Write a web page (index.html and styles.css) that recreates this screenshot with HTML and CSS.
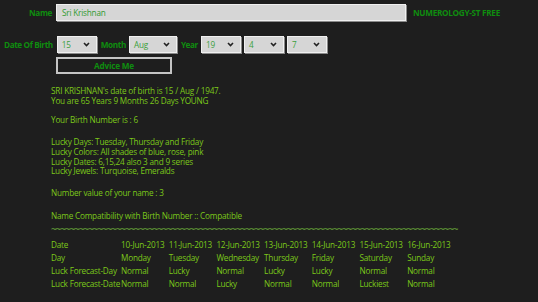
FILE: index.html
```html
<!DOCTYPE html>
<html lang="en">
<head>
    <meta charset="UTF-8">
    <meta name="viewport" content="width=device-width, initial-scale=1.0">
    <title>Numerology-ST Free</title>
    <link rel="stylesheet" href="styles.css">
</head>
<body>
    <div class="row-name">
        <span class="label name-label">Name</span>
        <div class="text-box">Sri Krishnan</div>
        <span class="app-title">NUMEROLOGY-ST FREE</span>
    </div>

    <div class="row-dob">
        <span class="label">Date Of Birth</span>
        <div class="select w-day"><span>15</span><svg width="7" height="5" viewBox="0 0 7 5"><path d="M1 1 L3.5 3.5 L6 1" fill="none" stroke="#222" stroke-width="1.6"/></svg></div>
        <span class="label">Month</span>
        <div class="select w-month"><span>Aug</span><svg width="7" height="5" viewBox="0 0 7 5"><path d="M1 1 L3.5 3.5 L6 1" fill="none" stroke="#222" stroke-width="1.6"/></svg></div>
        <span class="label">Year</span>
        <div class="select w-year"><span>19</span><svg width="7" height="5" viewBox="0 0 7 5"><path d="M1 1 L3.5 3.5 L6 1" fill="none" stroke="#222" stroke-width="1.6"/></svg></div>
        <div class="select w-year"><span>4</span><svg width="7" height="5" viewBox="0 0 7 5"><path d="M1 1 L3.5 3.5 L6 1" fill="none" stroke="#222" stroke-width="1.6"/></svg></div>
        <div class="select w-year"><span>7</span><svg width="7" height="5" viewBox="0 0 7 5"><path d="M1 1 L3.5 3.5 L6 1" fill="none" stroke="#222" stroke-width="1.6"/></svg></div>
    </div>

    <button class="btn-advice">Advice Me</button>

    <div class="output">
        <p class="p-first">SRI KRISHNAN's date of birth is 15 / Aug / 1947.<br>You are 65 Years 9 Months 26 Days YOUNG</p>
        <p class="p-birth">Your Birth Number is : 6</p>
        <p class="p-lucky">Lucky Days: Tuesday, Thursday and Friday<br>Lucky Colors: All shades of blue, rose, pink<br>Lucky Dates: 6,15,24 also 3 and 9 series<br>Lucky Jewels: Turquoise, Emeralds</p>
        <p class="p-value">Number value of your name : 3</p>
        <p class="p-compat">Name Compatibility with Birth Number :: Compatible</p>
        <div class="tilde">~~~~~~~~~~~~~~~~~~~~~~~~~~~~~~~~~~~~~~~~~~~~~~~~~~~~~~~~~~~~~~~~~~~~~~~~~~~~~~~~~~~~~~~~</div>
        <div class="forecast">
            <span class="cell-head">Date</span><span>10-Jun-2013</span><span>11-Jun-2013</span><span>12-Jun-2013</span><span>13-Jun-2013</span><span>14-Jun-2013</span><span>15-Jun-2013</span><span>16-Jun-2013</span>
            <span class="cell-head">Day</span><span>Monday</span><span>Tuesday</span><span>Wednesday</span><span>Thursday</span><span>Friday</span><span>Saturday</span><span>Sunday</span>
            <span class="cell-head">Luck Forecast-Day</span><span>Normal</span><span>Lucky</span><span>Normal</span><span>Lucky</span><span>Lucky</span><span>Normal</span><span>Normal</span>
            <span class="cell-head">Luck Forecast-Date</span><span>Normal</span><span>Normal</span><span>Lucky</span><span>Normal</span><span>Normal</span><span>Luckiest</span><span>Normal</span>
        </div>
    </div>
</body>
</html>
```

FILE: styles.css
```css
body {
    margin: 0;
    background-color: #1e1e1e;
    font-family: 'Open Sans', 'Noto Sans', sans-serif;
    font-size: 8.2px;
    letter-spacing: -0.2px;
    color: #7cc81a;
    width: 538px;
    height: 302px;
    overflow: hidden;
}
.label {
    font-weight: bold;
    color: #0f8d0f;
    letter-spacing: -0.4px;
    white-space: nowrap;
}
.row-name {
    display: flex;
    align-items: center;
    padding-top: 3px;
    height: 18px;
}
.name-label {
    width: 52px;
    text-align: right;
    padding-right: 4px;
}
.text-box {
    width: 340px;
    height: 15px;
    line-height: 15px;
    background-color: #d6d6d6;
    border: 1px solid #f0f0f0;
    box-shadow: 1px 1px 0 #8a8a8a;
    color: #2f9a2f;
    padding-left: 5px;
    padding-right: 3px;
}
.app-title {
    margin-left: 7px;
    font-weight: bold;
    letter-spacing: -0.3px;
    color: #0f8d0f;
}
.row-dob {
    display: flex;
    align-items: center;
    margin-top: 14px;
    padding-left: 4px;
    height: 18px;
}
.select {
    display: flex;
    align-items: center;
    justify-content: space-between;
    height: 15px;
    background-color: #d6d6d6;
    border: 1px solid #f0f0f0;
    box-shadow: 1px 1px 0 #8a8a8a;
    color: #3a9f3a;
    padding: 0 6px 0 4px;
    box-sizing: content-box;
}
.w-day { width: 28px; margin: 0 4px 0 4px; }
.w-month { width: 36px; margin: 0 4px 0 3px; }
.w-year { width: 28px; margin: 0 3px 0 3px; }
.w-year + .w-year { margin-left: 0; }
.btn-advice {
    display: block;
    margin: 4px 0 0 56px;
    width: 116px;
    height: 17px;
    padding: 0;
    background-color: #1e1e1e;
    border: 2px solid #c4c4c4;
    color: #0f8d0f;
    font-family: inherit;
    font-size: 8.2px;
    letter-spacing: -0.2px;
    font-weight: bold;
}
.output {
    padding-left: 51px;
    margin-top: 12px;
}
.output p {
    margin: 0;
    line-height: 9.7px;
    white-space: nowrap;
}
.p-birth { padding-top: 9.8px; }
.p-lucky { padding-top: 12.3px; }
.p-value { padding-top: 12.2px; }
.p-compat { padding-top: 13.3px; }
.tilde {
    height: 9.7px;
    white-space: nowrap;
    line-height: 9.7px;
    margin-top: 4.3px;
    font-size: 10px;
    letter-spacing: -1.1px;
    color: #6aa83a;
}
.forecast {
    display: grid;
    grid-template-columns: 70px repeat(7, 47.7px);
    grid-auto-rows: 13.3px;
    align-items: center;
    margin-top: 2.5px;
    white-space: nowrap;
}
```
